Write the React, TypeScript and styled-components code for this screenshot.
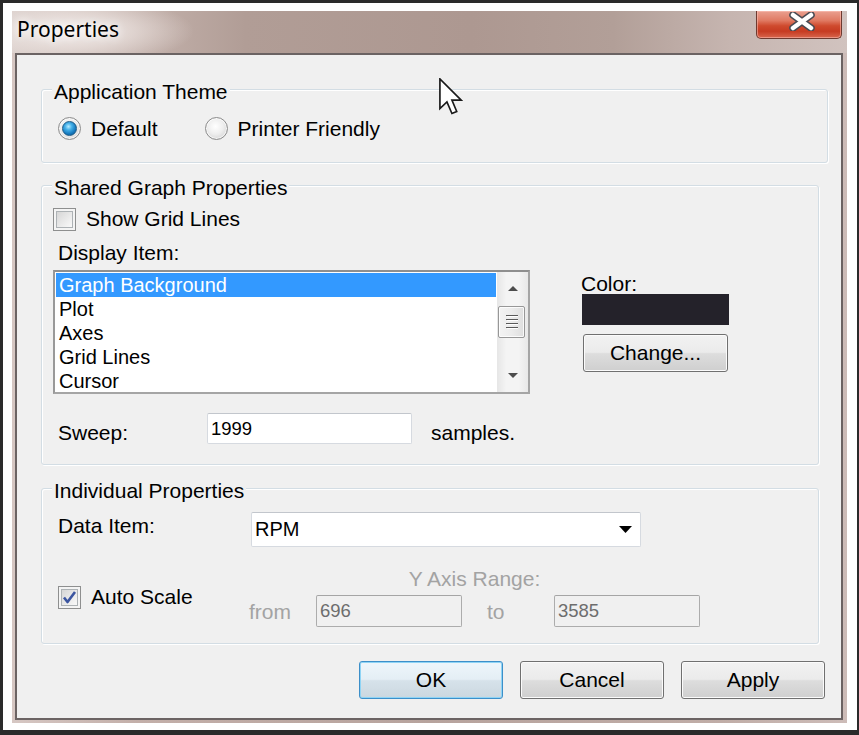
import React from 'react';
import styled, { createGlobalStyle } from 'styled-components';

const Global = createGlobalStyle`
  html, body { margin: 0; padding: 0; background: #fff; }
  body { font-family: "Liberation Sans", Arial, sans-serif; color: #000; }
  * { box-sizing: border-box; }
`;

const FONT = `"Liberation Sans", Arial, sans-serif`;

const Screen = styled.div`
  width: 859px;
  height: 735px;
  background: #fff;
  border-style: solid;
  border-color: #2a2a2a;
  border-width: 3px 2px 5px 3px;
  padding: 8px 10px 7px 9px;
  display: flex;
`;

const Window = styled.div`
  position: relative;
  flex: 1;
  display: flex;
  flex-direction: column;
  background: linear-gradient(90deg, #d6c7c3 0%, #c3afa9 15%, #b7a39d 50%, #c0ada7 85%, #cdbcb8 100%);
`;

const TitleBar = styled.div`
  height: 42px;
  display: flex;
  align-items: flex-start;
  padding: 4px 5px 0 5px;
  background:
    radial-gradient(ellipse 120px 34px at 62px 20px, rgba(246, 240, 238, 0.95) 0%, rgba(240, 232, 229, 0.6) 50%, rgba(255, 255, 255, 0) 100%),
    linear-gradient(90deg, #d8ccc8 0%, #c2b0aa 16%, #b19d96 28%, #ad9891 55%, #b29f98 72%, #c6b5b0 86%, #d1c3bf 100%);
`;

const Title = styled.span`
  font-family: "Noto Sans", "Open Sans", sans-serif;
  font-size: 21px;
  line-height: 28px;
  color: #000;
  text-shadow: 0 0 8px #fff, 0 0 12px rgba(255, 255, 255, 0.9);
`;

const CloseButton = styled.div`
  margin-left: auto;
  margin-top: -4px;
  width: 86px;
  height: 28px;
  border: 1px solid #6e3a30;
  border-top: none;
  border-radius: 0 0 5px 5px;
  background: linear-gradient(#eaa090 0%, #e07a63 35%, #cf4a2e 55%, #c63b22 75%, #d8664d 100%);
  box-shadow: inset 0 0 0 1px rgba(255, 200, 190, 0.5);
  display: flex;
  align-items: center;
  justify-content: center;
  padding-bottom: 6px;
  padding-left: 6px;
`;

const Frame = styled.div`
  flex: 1;
  display: flex;
  padding: 0 4px 3px 3px;
`;

const Content = styled.div`
  flex: 1;
  border: 2px solid #6b6363;
  background: #f0f0f0;
  display: flex;
  flex-direction: column;
  padding-left: 24px;
  font-family: ${FONT};
  font-size: 21px;
`;

const GroupBox = styled.fieldset<{ $width: number; $mt: number }>`
  width: ${p => p.$width}px;
  margin: ${p => p.$mt}px 0 0 0;
  padding: 0;
  min-width: 0;
  border: 1px solid #d3dde4;
  border-radius: 3px;
  box-shadow: inset 1px 1px 0 #fff, 1px 1px 0 #fff;
`;

const Legend = styled.legend`
  margin-left: 10px;
  padding: 6px 2px 0;
  font-size: 21px;
  line-height: 20px;
  background: #f0f0f0;
  color: #000;
`;

const GroupBody = styled.div<{ $pt: number; $pb: number; $pl: number }>`
  display: flex;
  flex-direction: column;
  padding: ${p => p.$pt}px 0 ${p => p.$pb}px ${p => p.$pl}px;
`;

const Row = styled.div<{ $mt?: number; $align?: string }>`
  display: flex;
  align-items: ${p => p.$align || 'flex-start'};
  margin-top: ${p => p.$mt || 0}px;
`;

const Option = styled.label<{ $ml?: number; $w?: number }>`
  display: flex;
  align-items: center;
  gap: 10px;
  height: 24px;
  line-height: 24px;
  margin-left: ${p => p.$ml || 0}px;
  ${p => (p.$w ? `width: ${p.$w}px;` : '')}
`;

const RadioCircle = styled.span<{ $checked?: boolean }>`
  width: 23px;
  height: 23px;
  border-radius: 50%;
  border: 1px solid #8c8c8c;
  background: radial-gradient(circle at 45% 40%, #ffffff 0%, #eeeeee 45%, #d2d2d2 85%, #c4c4c4 100%);
  box-shadow: inset 0 0 0 1px rgba(255, 255, 255, 0.7);
  display: flex;
  align-items: center;
  justify-content: center;
  &::after {
    content: '';
    display: ${p => (p.$checked ? 'block' : 'none')};
    width: 13px;
    height: 13px;
    border-radius: 50%;
    border: 1px solid #1c5a86;
    background: radial-gradient(circle at 42% 35%, #b8ecff 0%, #45b0e8 30%, #1478bd 65%, #0b4f82 100%);
  }
`;

const CheckBox = styled.span`
  width: 23px;
  height: 23px;
  border: 1px solid #8e8f8f;
  background: #f4f4f4;
  padding: 2px;
  display: flex;
  & > span {
    flex: 1;
    border: 1px solid #adb2b5;
    background: linear-gradient(135deg, #d6d6d6 0%, #e8e8e8 50%, #f9f9f9 100%);
    display: flex;
    align-items: center;
    justify-content: center;
  }
`;

const Label = styled.span<{ $w?: number; $ml?: number; $mt?: number; $gray?: boolean; $lh?: number }>`
  display: block;
  ${p => (p.$w ? `width: ${p.$w}px; flex-shrink: 0;` : '')}
  margin-left: ${p => p.$ml || 0}px;
  margin-top: ${p => p.$mt || 0}px;
  line-height: ${p => p.$lh || 24}px;
  color: ${p => (p.$gray ? '#a3a3a3' : '#000')};
  white-space: nowrap;
`;

const ListBox = styled.div`
  width: 477px;
  height: 124px;
  border: 2px solid #a5a5a5;
  border-top-color: #8f8f8f;
  border-left-color: #999;
  background: #fff;
  display: flex;
  overflow: hidden;
`;

const Items = styled.div`
  flex: 1;
  padding: 1px 1px 0 1px;
`;

const Item = styled.div<{ $selected?: boolean }>`
  height: 24px;
  line-height: 24px;
  padding-left: 3px;
  font-size: 20px;
  background: ${p => (p.$selected ? '#3399ff' : 'transparent')};
  color: ${p => (p.$selected ? '#fff' : '#000')};
`;

const ScrollBar = styled.div`
  width: 31px;
  display: flex;
  flex-direction: column;
  background: linear-gradient(90deg, #e6e6e6 0%, #f4f4f4 30%, #f4f4f4 70%, #e8e8e8 100%);
`;

const ScrollArrow = styled.div<{ $h: number }>`
  height: ${p => p.$h}px;
  display: flex;
  align-items: center;
  justify-content: center;
`;

const Thumb = styled.div`
  height: 32px;
  margin: 1px 3px 0 1px;
  border: 1px solid #979797;
  border-radius: 2px;
  background: linear-gradient(90deg, #f3f3f3 0%, #ececec 50%, #dedede 100%);
  box-shadow: inset 0 0 0 1px rgba(255, 255, 255, 0.8);
  display: flex;
  align-items: center;
  justify-content: center;
`;

const Track = styled.div`
  flex: 1;
`;

const ColorColumn = styled.div`
  display: flex;
  flex-direction: column;
  margin-left: 51px;
  margin-top: 4px;
`;

const Swatch = styled.div<{ $color: string }>`
  width: 147px;
  height: 31px;
  margin-left: 1px;
  background: ${p => p.$color};
`;

const Button = styled.button<{ $w: number; $default?: boolean; $ml?: number; $mt?: number }>`
  width: ${p => p.$w}px;
  height: 38px;
  margin-left: ${p => p.$ml || 0}px;
  margin-top: ${p => p.$mt || 0}px;
  padding: 0;
  font-family: ${FONT};
  font-size: 21px;
  color: #000;
  border: 1px solid ${p => (p.$default ? '#3c8fc9' : '#707070')};
  border-radius: 3px;
  background: ${p =>
    p.$default
      ? 'linear-gradient(#eef6fb 0%, #e4eef5 48%, #d6e2ea 52%, #cbd7df 100%)'
      : 'linear-gradient(#f2f2f2 0%, #ebebeb 48%, #dddddd 52%, #cfcfcf 100%)'};
  box-shadow: inset 0 0 0 1px ${p => (p.$default ? '#8fd4f5' : '#fbfbfb')};
`;

const TextInput = styled.div<{ $w: number; $h: number; $disabled?: boolean; $fs?: number }>`
  width: ${p => p.$w}px;
  height: ${p => p.$h}px;
  flex-shrink: 0;
  border: 1px solid ${p => (p.$disabled ? '#acacac' : '#d6dae0')};
  border-top-color: ${p => (p.$disabled ? '#a5a5a5' : '#c2c6cc')};
  border-radius: 2px;
  background: ${p => (p.$disabled ? '#f0f0f0' : '#fff')};
  color: ${p => (p.$disabled ? '#6d6d6d' : '#000')};
  font-size: ${p => p.$fs || 18.5}px;
  padding-left: 3px;
  display: flex;
  align-items: center;
`;

const Combo = styled(TextInput)`
  justify-content: space-between;
  padding-right: 8px;
`;

const RangeBlock = styled.div`
  display: flex;
  flex-direction: column;
  align-items: center;
`;

const ButtonRow = styled.div`
  display: flex;
  justify-content: flex-end;
  gap: 17px;
  margin-top: 17px;
  padding-right: 16px;
`;

const Cursor = styled.svg`
  position: absolute;
  left: 427px;
  top: 67px;
`;

const CloseX = () => (
  <svg width="26" height="19" viewBox="0 0 26 19">
    <path d="M4 3 L22 16 M22 3 L4 16" stroke="#4a4a52" strokeWidth="7.5" strokeLinecap="round" />
    <path d="M4 3 L22 16 M22 3 L4 16" stroke="#ffffff" strokeWidth="4.5" strokeLinecap="round" />
  </svg>
);

const Tri = ({ up, color = '#4d4d4d', w = 10, h = 5 }: { up?: boolean; color?: string; w?: number; h?: number }) => (
  <svg width={w} height={h} viewBox={`0 0 ${w} ${h}`}>
    <path d={up ? `M0 ${h} L${w / 2} 0 L${w} ${h} Z` : `M0 0 L${w} 0 L${w / 2} ${h} Z`} fill={color} />
  </svg>
);

const Check = () => (
  <svg width="15" height="15" viewBox="0 0 15 15">
    <path d="M2 7.5 L5.5 12 L13 2" stroke="#3b55a0" strokeWidth="2.6" fill="none" strokeLinejoin="round" />
  </svg>
);

const Grip = () => (
  <svg width="12" height="14" viewBox="0 0 12 14">
    {[1, 5, 9, 13].map(y => (
      <g key={y}>
        <line x1="0" y1={y - 0.5} x2="12" y2={y - 0.5} stroke="#5a5a5a" strokeWidth="1" />
        <line x1="1" y1={y + 0.5} x2="12" y2={y + 0.5} stroke="#ffffff" strokeWidth="1" />
      </g>
    ))}
  </svg>
);

export default function App() {
  return (
    <>
      <Global />
      <Screen>
        <Window>
          <TitleBar>
            <Title>Properties</Title>
            <CloseButton>
              <CloseX />
            </CloseButton>
          </TitleBar>
          <Frame>
            <Content>
              <GroupBox $width={787} $mt={21}>
                <Legend>Application Theme</Legend>
                <GroupBody $pt={14.5} $pb={21.5} $pl={16}>
                  <Row $align="center">
                    <Option>
                      <RadioCircle $checked />
                      Default
                    </Option>
                    <Option $ml={47}>
                      <RadioCircle />
                      Printer Friendly
                    </Option>
                  </Row>
                </GroupBody>
              </GroupBox>

              <GroupBox $width={778} $mt={9}>
                <Legend>Shared Graph Properties</Legend>
                <GroupBody $pt={9} $pb={19} $pl={11}>
                  <Option>
                    <CheckBox>
                      <span />
                    </CheckBox>
                    Show Grid Lines
                  </Option>
                  <Label $ml={5} $mt={10}>Display Item:</Label>
                  <Row $mt={5}>
                    <ListBox>
                      <Items>
                        <Item $selected>Graph Background</Item>
                        <Item>Plot</Item>
                        <Item>Axes</Item>
                        <Item>Grid Lines</Item>
                        <Item>Cursor</Item>
                      </Items>
                      <ScrollBar>
                        <ScrollArrow $h={33}>
                          <Tri up />
                        </ScrollArrow>
                        <Thumb>
                          <Grip />
                        </Thumb>
                        <Track />
                        <ScrollArrow $h={34}>
                          <Tri />
                        </ScrollArrow>
                      </ScrollBar>
                    </ListBox>
                    <ColorColumn>
                      <Label $lh={20}>Color:</Label>
                      <Swatch $color="#24222a" />
                      <Button $w={145} $ml={2} $mt={9}>Change...</Button>
                    </ColorColumn>
                  </Row>
                  <Row $mt={19}>
                    <Label $ml={5} $w={149} $mt={8}>Sweep:</Label>
                    <TextInput $w={205} $h={31}>1999</TextInput>
                    <Label $ml={19} $mt={8}>samples.</Label>
                  </Row>
                </GroupBody>
              </GroupBox>

              <GroupBox $width={778} $mt={10}>
                <Legend>Individual Properties</Legend>
                <GroupBody $pt={11} $pb={16} $pl={11}>
                  <Row>
                    <Label $ml={5} $w={193} $mt={2}>Data Item:</Label>
                    <Combo $w={390} $h={35} $fs={20}>
                      <span>RPM</span>
                      <Tri color="#000" w={13} h={7} />
                    </Combo>
                  </Row>
                  <Row $mt={20} $align="center">
                    <Option $w={191} $ml={5}>
                      <CheckBox>
                        <span>
                          <Check />
                        </span>
                      </CheckBox>
                      Auto Scale
                    </Option>
                    <RangeBlock>
                      <Label $gray>Y Axis Range:</Label>
                      <Row $mt={4}>
                        <Label $gray $w={67} $mt={5}>from</Label>
                        <TextInput $w={146} $h={32} $disabled>696</TextInput>
                        <Label $gray $w={67} $ml={25} $mt={5}>to</Label>
                        <TextInput $w={146} $h={32} $disabled>3585</TextInput>
                      </Row>
                    </RangeBlock>
                  </Row>
                </GroupBody>
              </GroupBox>

              <ButtonRow>
                <Button $w={144} $default>OK</Button>
                <Button $w={144}>Cancel</Button>
                <Button $w={144}>Apply</Button>
              </ButtonRow>
            </Content>
          </Frame>
          <Cursor width="24" height="37" viewBox="0 0 13 20">
            <path
              d="M0.5 0.5 V16.5 L4.3 12.9 L7 19.2 L9.6 18.1 L7 12 H12 Z"
              fill="#fff"
              stroke="#1a1a1a"
              strokeWidth="0.9"
              strokeLinejoin="miter"
            />
          </Cursor>
        </Window>
      </Screen>
    </>
  );
}
